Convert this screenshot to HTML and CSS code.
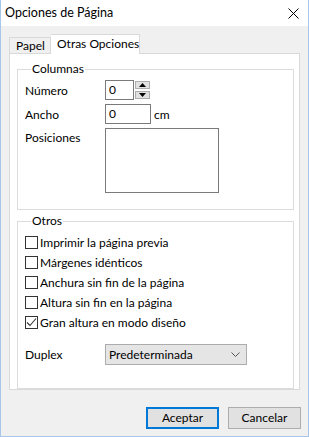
FILE: index.html
```html
<!DOCTYPE html>
<html lang="es">
<head>
<meta charset="utf-8">
<link rel="stylesheet" href="styles.css">
</head>
<body>
<div class="window">
  <div class="titlebar">
    <span class="title">Opciones de Página</span>
    <svg class="close" width="11" height="11" viewBox="0 0 11 11"><path d="M0.5 0.5 L10.5 10.5 M10.5 0.5 L0.5 10.5" stroke="#000" stroke-width="1" fill="none"/></svg>
  </div>
  <div class="client">
    <div class="tabs">
      <div class="tab">Papel</div>
      <div class="tab active">Otras Opciones</div>
    </div>
    <div class="panel">
      <fieldset class="group cols">
        <legend>Columnas</legend>
        <div class="row">
          <span class="lbl">Número</span>
          <div class="field num">0</div>
          <div class="spin">
            <div class="spin-btn"><svg width="7" height="4" viewBox="0 0 7 4"><path d="M3.5 0 L7 4 L0 4 Z" fill="#000"/></svg></div>
            <div class="spin-btn"><svg width="7" height="4" viewBox="0 0 7 4"><path d="M0 0 L7 0 L3.5 4 Z" fill="#000"/></svg></div>
          </div>
        </div>
        <div class="row">
          <span class="lbl">Ancho</span>
          <div class="field width">0</div>
          <span class="unit">cm</span>
        </div>
        <div class="row top">
          <span class="lbl">Posiciones</span>
          <div class="listbox"></div>
        </div>
      </fieldset>
      <fieldset class="group others">
        <legend>Otros</legend>
        <div class="check"><span class="box"></span><span>Imprimir la página previa</span></div>
        <div class="check"><span class="box"></span><span>Márgenes idénticos</span></div>
        <div class="check"><span class="box"></span><span>Anchura sin fin de la página</span></div>
        <div class="check"><span class="box"></span><span>Altura sin fin en la página</span></div>
        <div class="check"><span class="box"><svg width="11" height="11" viewBox="0 0 11 11"><path d="M1 5.5 L4 8.5 L10 1.5" stroke="#333" stroke-width="1.1" fill="none"/></svg></span><span>Gran altura en modo diseño</span></div>
        <div class="row duplex">
          <span class="lbl">Duplex</span>
          <div class="select"><span>Predeterminada</span><svg width="9" height="5" viewBox="0 0 9 5"><path d="M0.5 0.5 L4.5 4.5 L8.5 0.5" stroke="#555" stroke-width="1" fill="none"/></svg></div>
        </div>
      </fieldset>
    </div>
    <div class="buttons">
      <div class="btn default">Aceptar</div>
      <div class="btn">Cancelar</div>
    </div>
  </div>
</div>
</body>
</html>
```
FILE: styles.css
```css
html, body {
  margin: 0;
  padding: 0;
}
body {
  font-family: Lato, "Noto Sans", sans-serif;
  font-size: 12px;
  color: #000;
  background: #fff;
  white-space: nowrap;
}
.window {
  width: 309px;
  height: 437px;
  box-sizing: border-box;
  border: 1px solid #a6c6ea;
  border-top: none;
  display: flex;
  flex-direction: column;
  background: #f0f0f0;
}
.titlebar {
  height: 26px;
  background: #fff;
  display: flex;
  align-items: center;
  justify-content: space-between;
  padding: 0 9px 0 4px;
  flex-shrink: 0;
}
.title {
  font-size: 12.5px;
  line-height: 16px;
}
.close {
  display: block;
}
.client {
  flex: 1;
  padding: 8px 8px 0 8px;
  display: flex;
  flex-direction: column;
}
.tabs {
  display: flex;
  align-items: flex-end;
  height: 19px;
}
.tab {
  width: 42px;
  height: 16px;
  box-sizing: border-box;
  border: 1px solid #d9d9d9;
  border-bottom: none;
  padding-left: 6px;
  line-height: 15px;
  background: #f0f0f0;
}
.tab.active {
  width: 89px;
  height: 20px;
  margin-bottom: -1px;
  background: #fff;
  border-left: none;
  padding-left: 6px;
  line-height: 17px;
  position: relative;
  z-index: 1;
}
.panel {
  background: #fff;
  border: 1px solid #d9d9d9;
  height: 337px;
  box-sizing: border-box;
  padding: 7px 5px 0 7px;
  display: flex;
  flex-direction: column;
  gap: 3px;
}
.group {
  margin: 0;
  border: 1px solid #dcdcdc;
  padding: 0 0 0 7px;
  min-width: 0;
}
.group legend {
  padding: 0 1px;
  margin-left: 6px;
  line-height: 16px;
}
.cols {
  padding-top: 3px;
  padding-bottom: 16px;
  display: flex;
  flex-direction: column;
  gap: 4px;
}
.row {
  display: flex;
  align-items: center;
  height: 20px;
}
.row.top {
  align-items: flex-start;
  height: auto;
}
.row.top .lbl {
  padding-top: 2px;
}
.lbl {
  width: 80px;
  flex-shrink: 0;
}
.field {
  height: 20px;
  box-sizing: border-box;
  border: 1px solid #7a7a7a;
  background: #fff;
  padding-left: 3px;
  line-height: 18px;
}
.num { width: 29px; }
.width { width: 46px; }
.unit { margin-left: 3px; }
.spin {
  display: flex;
  flex-direction: column;
  gap: 2px;
  margin-left: 1px;
  height: 19px;
}
.spin-btn {
  width: 15px;
  height: 8px;
  box-sizing: border-box;
  border: 1px solid #adadad;
  background: #e1e1e1;
  display: flex;
  align-items: center;
  justify-content: center;
}
.spin-btn svg { display: block; }
.listbox {
  width: 114px;
  height: 65px;
  box-sizing: border-box;
  border: 1px solid #7a7a7a;
  background: #fff;
}
.others {
  flex: 1;
  padding-top: 3px;
  padding-bottom: 16px;
}
.check {
  display: flex;
  align-items: center;
  height: 20px;
  gap: 2px;
}
.box {
  width: 13px;
  height: 13px;
  box-sizing: border-box;
  border: 1px solid #333;
  background: #fff;
  display: flex;
  align-items: center;
  justify-content: center;
  flex-shrink: 0;
}
.box svg { display: block; }
.duplex {
  margin-top: 12px;
  height: 21px;
}
.select {
  width: 142px;
  height: 21px;
  box-sizing: border-box;
  border: 1px solid #acacac;
  background: #e5e5e5;
  display: flex;
  align-items: center;
  justify-content: space-between;
  padding: 0 6px 0 3px;
}
.select svg { display: block; }
.buttons {
  display: flex;
  justify-content: flex-end;
  gap: 9px;
  margin-top: 17px;
  margin-right: -1px;
}
.btn {
  width: 73px;
  height: 22px;
  box-sizing: border-box;
  border: 1px solid #adadad;
  background: #e1e1e1;
  text-align: center;
  line-height: 20px;
}
.btn.default {
  border: 2px solid #0078d7;
  line-height: 18px;
}
```
